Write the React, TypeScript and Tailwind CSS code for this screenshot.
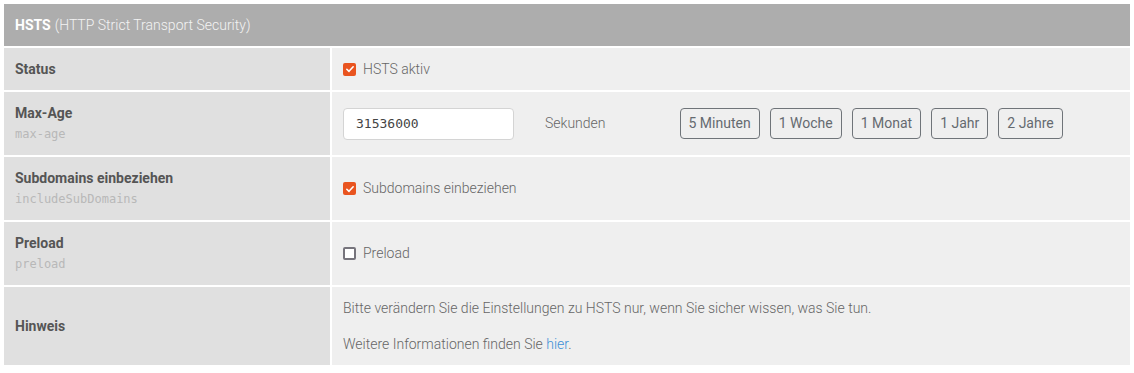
import React, { useState } from 'react';

const Check: React.FC<{ checked: boolean; label: string; onToggle: () => void }> = ({ checked, label, onToggle }) => (
  <label className="flex items-center cursor-pointer" onClick={onToggle}>
    {checked ? (
      <span className="flex h-[13px] w-[13px] items-center justify-center rounded-[2px] bg-[#e9541f]">
        <svg viewBox="0 0 12 12" className="h-[10px] w-[10px]">
          <path d="M2.2 6.3 L4.8 8.8 L9.8 3.4" fill="none" stroke="#fff" strokeWidth="1.9" strokeLinecap="round" strokeLinejoin="round" />
        </svg>
      </span>
    ) : (
      <span className="h-[13px] w-[13px] rounded-[2px] border-2 border-[#76747c] bg-white" />
    )}
    <span className="ml-[7px] text-[14px] font-light text-[#666]">{label}</span>
  </label>
);

const Label: React.FC<{ title: string; code?: string }> = ({ title, code }) => (
  <div className="flex flex-col justify-center bg-[#e0e0e0] px-[11px]">
    <div className="text-[14px] font-bold leading-5 text-[#555]">{title}</div>
    {code && (
      <div className="mt-[1px] font-['DejaVu_Sans_Mono',monospace] text-[12px] leading-5 text-[#b8b8b8]">{code}</div>
    )}
  </div>
);

const presets = [
  { label: '5 Minuten', value: 300 },
  { label: '1 Woche', value: 604800 },
  { label: '1 Monat', value: 2592000 },
  { label: '1 Jahr', value: 31536000 },
  { label: '2 Jahre', value: 63072000 },
];

export default function App() {
  const [active, setActive] = useState(true);
  const [subdomains, setSubdomains] = useState(true);
  const [preload, setPreload] = useState(false);
  const [maxAge, setMaxAge] = useState('31536000');

  return (
    <div className="bg-white p-1 font-['Roboto',sans-serif]">
      <div className="grid grid-cols-[326px_1fr] gap-[2px]">
        {/* Header */}
        <div className="col-span-2 flex h-[42px] items-center bg-[#adadad] px-[11px] text-[14px] text-white">
          <span className="font-bold">HSTS</span>
          <span className="ml-1 font-light text-[#f3f3f3]">(HTTP Strict Transport Security)</span>
        </div>

        {/* Status */}
        <div className="flex h-[42px] items-center bg-[#e0e0e0] px-[11px] text-[14px] font-bold text-[#555]">Status</div>
        <div className="flex items-center bg-[#efefef] px-[11px]">
          <Check checked={active} label="HSTS aktiv" onToggle={() => setActive(!active)} />
        </div>

        {/* Max-Age */}
        <div className="grid h-[63px]"><Label title="Max-Age" code="max-age" /></div>
        <div className="flex items-center bg-[#efefef] px-[11px]">
          <input
            type="text"
            value={maxAge}
            onChange={(e) => setMaxAge(e.target.value)}
            className="h-[32px] w-[171px] rounded-[4px] border border-[#d4d4d4] bg-white px-3 font-['DejaVu_Sans_Mono',monospace] text-[13px] text-[#444] outline-none"
          />
          <span className="ml-[31px] text-[14px] font-light text-[#666]">Sekunden</span>
          <div className="ml-[74px] flex gap-[10px]">
            {presets.map((p) => (
              <button
                key={p.label}
                onClick={() => setMaxAge(String(p.value))}
                className="h-[31px] rounded-[4px] border border-[#6f7479] px-[8px] text-[14px] text-[#656a6f]"
              >
                {p.label}
              </button>
            ))}
          </div>
        </div>

        {/* Subdomains */}
        <div className="grid h-[63px]"><Label title="Subdomains einbeziehen" code="includeSubDomains" /></div>
        <div className="flex items-center bg-[#efefef] px-[11px]">
          <Check checked={subdomains} label="Subdomains einbeziehen" onToggle={() => setSubdomains(!subdomains)} />
        </div>

        {/* Preload */}
        <div className="grid h-[63px]"><Label title="Preload" code="preload" /></div>
        <div className="flex items-center bg-[#efefef] px-[11px]">
          <Check checked={preload} label="Preload" onToggle={() => setPreload(!preload)} />
        </div>

        {/* Hinweis */}
        <div className="flex h-[78px] items-center bg-[#e0e0e0] px-[11px] text-[14px] font-bold text-[#555]">Hinweis</div>
        <div className="flex flex-col justify-center gap-4 bg-[#efefef] px-[11px] text-[14px] font-light leading-5 text-[#666]">
          <p>Bitte verändern Sie die Einstellungen zu HSTS nur, wenn Sie sicher wissen, was Sie tun.</p>
          <p>
            Weitere Informationen finden Sie <a href="#" className="text-[#3d8fd6]">hier</a>.
          </p>
        </div>
      </div>
    </div>
  );
}
